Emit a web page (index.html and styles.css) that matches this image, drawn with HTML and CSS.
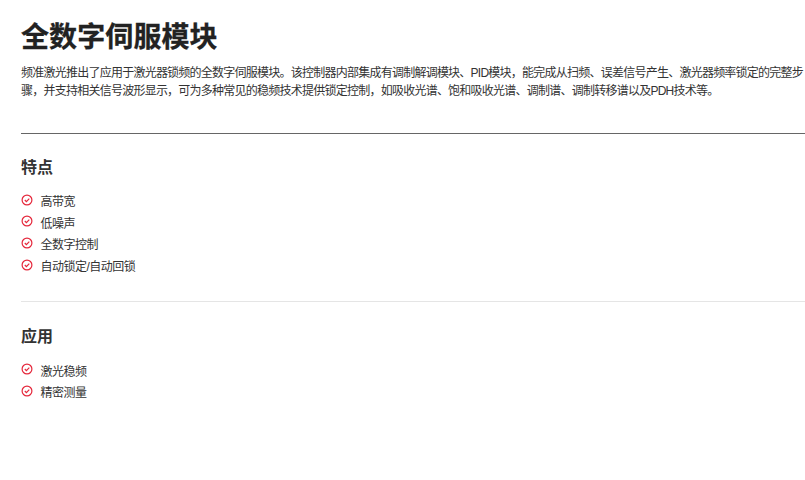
FILE: index.html
```html
<!DOCTYPE html>
<html lang="zh-CN">
<head>
<meta charset="utf-8">
<title>全数字伺服模块</title>
<link rel="stylesheet" href="styles.css">
</head>
<body>
<main class="page">
  <h1 class="title">全数字伺服模块</h1>
  <p class="intro">频准激光推出了应用于激光器锁频的全数字伺服模块。该控制器内部集成有调制解调模块、PID模块，能完成从扫频、误差信号产生、激光器频率锁定的完整步骤，并支持相关信号波形显示，可为多种常见的稳频技术提供锁定控制，如吸收光谱、饱和吸收光谱、调制谱、调制转移谱以及PDH技术等。</p>
  <hr class="rule-dark">
  <section class="section">
    <h2 class="heading">特点</h2>
    <ul class="list">
      <li class="item"><svg class="check" viewBox="0 0 12 12"><circle cx="6" cy="6" r="4.9"/><path d="M3.8 6l1.6 1.6 2.9-3"/></svg>高带宽</li>
      <li class="item"><svg class="check" viewBox="0 0 12 12"><circle cx="6" cy="6" r="4.9"/><path d="M3.8 6l1.6 1.6 2.9-3"/></svg>低噪声</li>
      <li class="item"><svg class="check" viewBox="0 0 12 12"><circle cx="6" cy="6" r="4.9"/><path d="M3.8 6l1.6 1.6 2.9-3"/></svg>全数字控制</li>
      <li class="item"><svg class="check" viewBox="0 0 12 12"><circle cx="6" cy="6" r="4.9"/><path d="M3.8 6l1.6 1.6 2.9-3"/></svg>自动锁定/自动回锁</li>
    </ul>
  </section>
  <hr class="rule-light">
  <section class="section section-apply">
    <h2 class="heading">应用</h2>
    <ul class="list">
      <li class="item"><svg class="check" viewBox="0 0 12 12"><circle cx="6" cy="6" r="4.9"/><path d="M3.8 6l1.6 1.6 2.9-3"/></svg>激光稳频</li>
      <li class="item"><svg class="check" viewBox="0 0 12 12"><circle cx="6" cy="6" r="4.9"/><path d="M3.8 6l1.6 1.6 2.9-3"/></svg>精密测量</li>
    </ul>
  </section>
</main>
</body>
</html>
```
FILE: styles.css
```css
html, body { margin: 0; padding: 0; background: #fff; overflow: hidden; }
body { font-family: "Liberation Sans", "Noto Sans CJK SC", sans-serif; color: #333; }
.page { padding: 17px 0 0 21px; }
.title { margin: 0; font-size: 28px; line-height: 42px; font-weight: 700; color: #222; letter-spacing: 0.1px; -webkit-text-stroke: 0.3px #222; }
.intro { margin: 5px 0 0; font-size: 12px; line-height: 18px; color: #333; letter-spacing: -0.76px; }
.rule-dark { margin: 33px 0 0; border: 0; border-top: 1px solid #666; }
.rule-light { margin: 25px 0 0; border: 0; border-top: 1px solid #e5e5e5; }
.section { padding-top: 22px; }
.section-apply { padding-top: 23px; }
.heading { margin: 0; font-size: 16px; line-height: 24px; font-weight: 700; color: #333; }
.list { margin: 10px 0 0; padding: 0; list-style: none; }
.item { display: flex; align-items: center; height: 21.6px; font-size: 12px; color: #333; letter-spacing: -0.5px; }
.check { width: 12px; height: 12px; margin-right: 7.5px; flex: none; fill: none; stroke: #e5283c; stroke-width: 1.2; position: relative; top: -1px; }
```
